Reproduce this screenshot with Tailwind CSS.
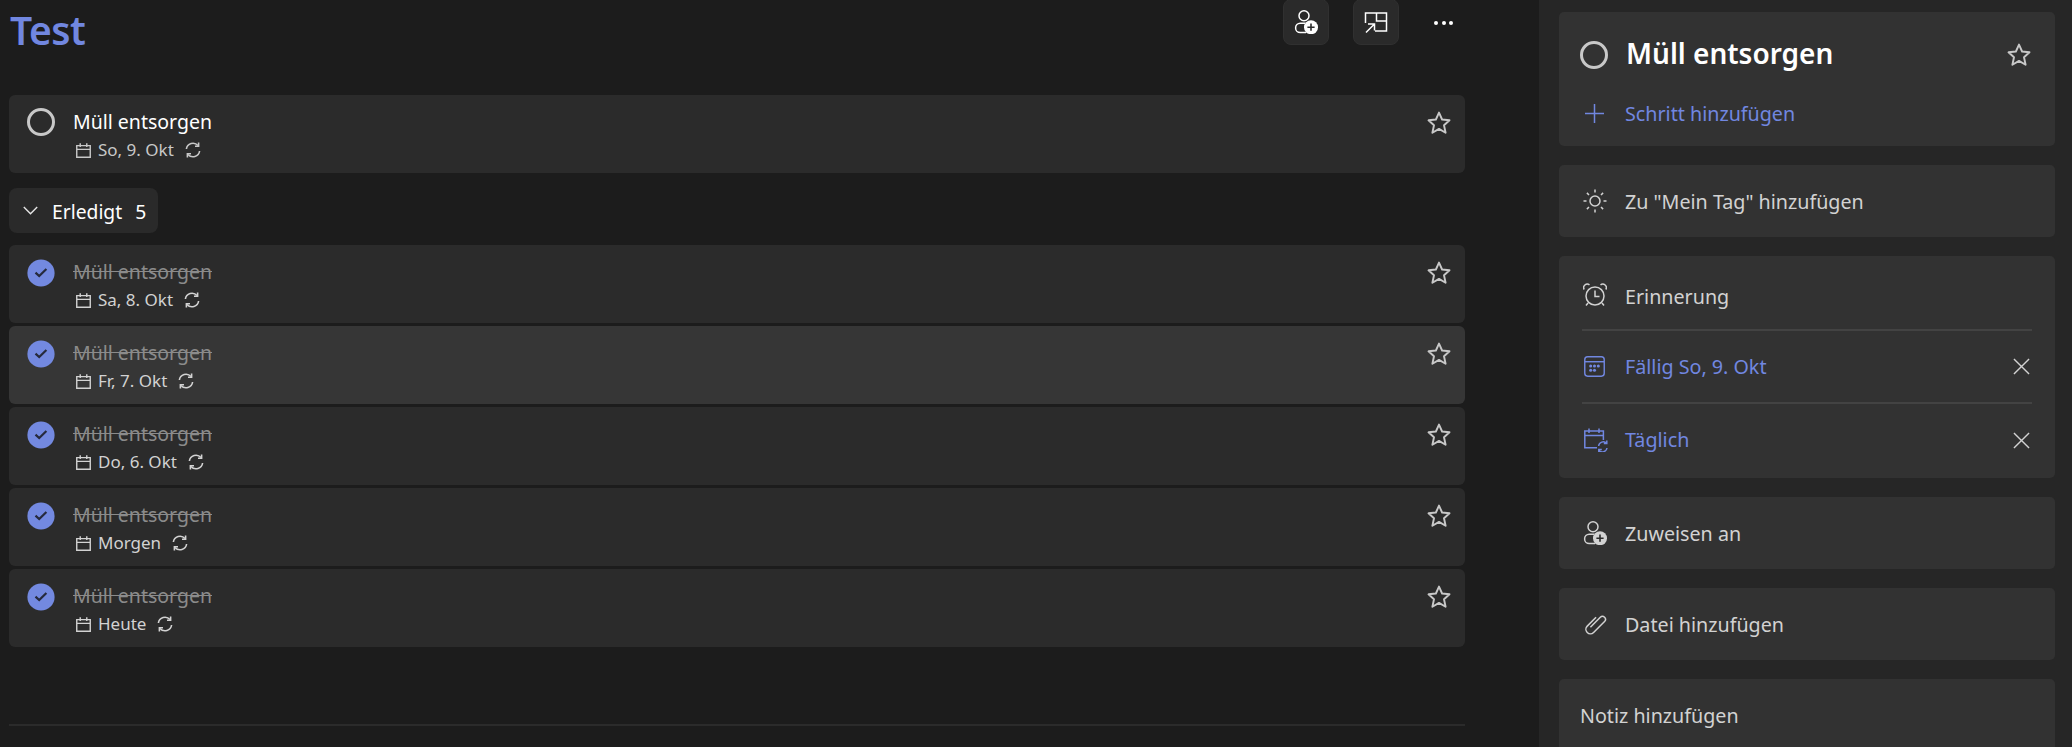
<!DOCTYPE html>
<html lang="de">
<head>
<meta charset="utf-8">
<script src="https://cdn.jsdelivr.net/npm/@tailwindcss/browser@4"></script>
</head>
<body class="bg-[#1c1c1c] overflow-hidden font-['Noto_Sans','Open_Sans',sans-serif]">
<svg class="hidden" width="0" height="0">
  <symbol id="star" viewBox="0 0 24 24"><path d="M12 1.6l3.1 6.9 7.4.8-5.5 5 1.6 7.5-6.6-3.9-6.6 3.9 1.6-7.5-5.5-5 7.4-.8z" fill="none" stroke="currentColor" stroke-width="1.9" stroke-linejoin="round"/></symbol>
  <symbol id="cal" viewBox="0 0 16 16"><path d="M.8 2.800h14.400v12.400H.8zM.8 6.800h14.400M4.500.3v4M11.500.3v4" fill="none" stroke="currentColor" stroke-width="1.5"/></symbol>
  <symbol id="sync" viewBox="0 0 16 16"><g fill="none" stroke="currentColor" stroke-width="1.6"><path d="M1.4 7A6.6 6.6 0 0 1 13 3.6"/><path d="M14.6 9A6.6 6.6 0 0 1 3 12.4"/><path d="M13.6.6v3.6H10"/><path d="M2.4 15.400v-3.600H6"/></g></symbol>
  <symbol id="assign" viewBox="0 0 24 24"><g fill="none" stroke="currentColor" stroke-width="1.5"><circle cx="10" cy="5.800" r="5"/><path d="M12 22.500H6.200a4.400 4.400 0 0 1 0-9.200h5"/></g><circle cx="17" cy="17.200" r="7" fill="currentColor"/><path d="M17 13.600v7.200M13.400 17.200h7.200" stroke="#2b2b2b" stroke-width="1.6"/></symbol>
  <symbol id="check" viewBox="0 0 28 28"><circle cx="14" cy="14" r="13.600" fill="#7389e0"/><path d="M8.500 13.600l3.700 3.400 7.200-7" fill="none" stroke="#262a3c" stroke-width="2.200"/></symbol>
  <symbol id="x" viewBox="0 0 18 18"><path d="M1 1l16 16M17 1L1 17" fill="none" stroke="currentColor" stroke-width="1.500"/></symbol>
</svg>
<div class="flex h-[747px] w-[2072px]">
  <main class="flex w-[1539px] shrink-0 flex-col pr-[74px] pl-[9px]">
    <header class="flex h-[95px] shrink-0 items-start">
      <h1 class="mt-[5px] ml-[1px] text-[39px] leading-[50px] font-semibold tracking-[-0.5px] text-[#7187e0]">Test</h1>
      <div class="ml-auto flex items-center">
        <button class="-mt-[1px] flex size-[46px] items-center justify-center rounded-[8px] border border-[#303030] bg-[#2a2a2a] text-white"><svg class="size-[24px]"><use href="#assign"/></svg></button>
        <button class="-mt-[1px] ml-[24px] flex size-[46px] items-center justify-center rounded-[8px] border border-[#303030] bg-[#2a2a2a] text-white">
          <svg class="size-[24px]" viewBox="0 0 24 24" fill="none" stroke="currentColor" stroke-width="1.500"><path d="M1.500 13V3h21v18H11M12.500 3v8h10"/><path d="M2 22.500l8-8M4 14h6.500v6.500"/></svg>
        </button>
        <div class="ml-[35px] mr-[12px] flex gap-[3.500px]"><span class="size-[4px] rounded-full bg-white"></span><span class="size-[4px] rounded-full bg-white"></span><span class="size-[4px] rounded-full bg-white"></span></div>
      </div>
    </header>

    <div class="flex h-[78px] shrink-0 rounded-[6px] bg-[#2b2b2b] pt-[13px] pr-[14px] pl-[18px]">
      <span class="size-[28px] shrink-0 rounded-full border-[3px] border-[#c8c8c8]"></span>
      <div class="ml-[18px]">
        <p class="text-[19.500px] leading-[27px] text-white">Müll entsorgen</p>
        <p class="mt-[4px] flex items-center text-[17px] leading-[22px] text-[#c8c8c8]"><svg class="ml-[3px] mr-[7px] size-[15px]"><use href="#cal"/></svg>So, 9. Okt<svg class="ml-[11px] size-[16px]"><use href="#sync"/></svg></p>
      </div>
      <svg class="ml-auto mt-[3px] size-[24px] text-[#c8c8c8]"><use href="#star"/></svg>
    </div>

    <div class="mt-[15px] flex h-[45px] w-[149px] shrink-0 items-center rounded-[8px] bg-[#2a2a2a] pt-[4px] pl-[14px] text-[19.300px] text-white">
      <svg class="-mt-[4px] size-[15px]" viewBox="0 0 15 15" fill="none" stroke="#e6e6e6" stroke-width="1.400"><path d="M.8 4l6.700 6.700L14.200 4"/></svg>
      <span class="ml-[14px]">Erledigt</span><span class="ml-[13px]">5</span>
    </div>

    <div class="mt-[12px] flex flex-col gap-[3px]">
      <div class="flex h-[78px] rounded-[6px] bg-[#2b2b2b] pt-[13px] pr-[14px] pl-[18px]">
        <svg class="mt-[1px] size-[28px] shrink-0"><use href="#check"/></svg>
        <div class="ml-[18px]">
          <p class="text-[19.500px] leading-[27px] text-[#8b8b8b] line-through">Müll entsorgen</p>
          <p class="mt-[4px] flex items-center text-[17px] leading-[22px] text-[#d2d2d2]"><svg class="ml-[3px] mr-[7px] size-[15px]"><use href="#cal"/></svg>Sa, 8. Okt<svg class="ml-[11px] size-[16px]"><use href="#sync"/></svg></p>
        </div>
        <svg class="ml-auto mt-[3px] size-[24px] text-[#c8c8c8]"><use href="#star"/></svg>
      </div>
      <div class="flex h-[78px] rounded-[6px] bg-[#363636] pt-[13px] pr-[14px] pl-[18px]">
        <svg class="mt-[1px] size-[28px] shrink-0"><use href="#check"/></svg>
        <div class="ml-[18px]">
          <p class="text-[19.500px] leading-[27px] text-[#8b8b8b] line-through">Müll entsorgen</p>
          <p class="mt-[4px] flex items-center text-[17px] leading-[22px] text-[#d2d2d2]"><svg class="ml-[3px] mr-[7px] size-[15px]"><use href="#cal"/></svg>Fr, 7. Okt<svg class="ml-[11px] size-[16px]"><use href="#sync"/></svg></p>
        </div>
        <svg class="ml-auto mt-[3px] size-[24px] text-[#c8c8c8]"><use href="#star"/></svg>
      </div>
      <div class="flex h-[78px] rounded-[6px] bg-[#2b2b2b] pt-[13px] pr-[14px] pl-[18px]">
        <svg class="mt-[1px] size-[28px] shrink-0"><use href="#check"/></svg>
        <div class="ml-[18px]">
          <p class="text-[19.500px] leading-[27px] text-[#8b8b8b] line-through">Müll entsorgen</p>
          <p class="mt-[4px] flex items-center text-[17px] leading-[22px] text-[#d2d2d2]"><svg class="ml-[3px] mr-[7px] size-[15px]"><use href="#cal"/></svg>Do, 6. Okt<svg class="ml-[11px] size-[16px]"><use href="#sync"/></svg></p>
        </div>
        <svg class="ml-auto mt-[3px] size-[24px] text-[#c8c8c8]"><use href="#star"/></svg>
      </div>
      <div class="flex h-[78px] rounded-[6px] bg-[#2b2b2b] pt-[13px] pr-[14px] pl-[18px]">
        <svg class="mt-[1px] size-[28px] shrink-0"><use href="#check"/></svg>
        <div class="ml-[18px]">
          <p class="text-[19.500px] leading-[27px] text-[#8b8b8b] line-through">Müll entsorgen</p>
          <p class="mt-[4px] flex items-center text-[17px] leading-[22px] text-[#d2d2d2]"><svg class="ml-[3px] mr-[7px] size-[15px]"><use href="#cal"/></svg>Morgen<svg class="ml-[11px] size-[16px]"><use href="#sync"/></svg></p>
        </div>
        <svg class="ml-auto mt-[3px] size-[24px] text-[#c8c8c8]"><use href="#star"/></svg>
      </div>
      <div class="flex h-[78px] rounded-[6px] bg-[#2b2b2b] pt-[13px] pr-[14px] pl-[18px]">
        <svg class="mt-[1px] size-[28px] shrink-0"><use href="#check"/></svg>
        <div class="ml-[18px]">
          <p class="text-[19.500px] leading-[27px] text-[#8b8b8b] line-through">Müll entsorgen</p>
          <p class="mt-[4px] flex items-center text-[17px] leading-[22px] text-[#d2d2d2]"><svg class="ml-[3px] mr-[7px] size-[15px]"><use href="#cal"/></svg>Heute<svg class="ml-[11px] size-[16px]"><use href="#sync"/></svg></p>
        </div>
        <svg class="ml-auto mt-[3px] size-[24px] text-[#c8c8c8]"><use href="#star"/></svg>
      </div>
    </div>
    <div class="mt-[77px] h-[2px] shrink-0 bg-[#2b2b2b]"></div>
  </main>

  <aside class="flex flex-1 flex-col bg-[#262626] pt-[12px] pr-[17px] pl-[20px] text-[19.700px]">
    <section class="flex h-[134px] shrink-0 flex-col rounded-[5px] bg-[#323232] px-[21px]">
      <div class="mt-[27px] flex items-center">
        <span class="size-[28px] shrink-0 rounded-full border-[3px] border-[#c8c8c8]"></span>
        <h2 class="ml-[18px] -mt-[4px] text-[28px] leading-[36px] font-semibold text-white">Müll entsorgen</h2>
        <svg class="ml-auto mr-[3px] size-[24px] text-[#c8c8c8]"><use href="#star"/></svg>
      </div>
      <div class="mt-[28px] flex items-center text-[#7187e0]">
        <svg class="ml-[5px] size-[19px]" viewBox="0 0 19 19" fill="none" stroke="currentColor" stroke-width="1.500"><path d="M9.500 0v19M0 9.500h19"/></svg>
        <span class="ml-[21px]">Schritt hinzufügen</span>
      </div>
    </section>

    <section class="mt-[19px] flex h-[72px] shrink-0 items-center rounded-[5px] bg-[#323232] px-[23px] text-[#d2d2d2]">
      <svg class="ml-[1px] size-[24px]" viewBox="0 0 24 24" fill="none" stroke="currentColor" stroke-width="1.500"><circle cx="12" cy="12" r="5"/><path d="M12 .5v3M12 20.500v3M.5 12h3M20.500 12h3M3.900 3.900L6 6M18 18l2.100 2.100M3.900 20.100L6 18M18 6l2.100-2.100"/></svg>
      <span class="ml-[18px] pt-[2px]">Zu "Mein Tag" hinzufügen</span>
    </section>

    <section class="mt-[19px] flex h-[222px] shrink-0 flex-col rounded-[5px] bg-[#323232] px-[23px]">
      <div class="flex h-[75px] shrink-0 items-center border-b-2 border-[#434343] text-[#d2d2d2]">
        <svg class="ml-[1px] mt-[5px] size-[24px]" viewBox="0 0 24 24" fill="none" stroke="currentColor" stroke-width="1.500"><circle cx="12" cy="13" r="9"/><path d="M12 7.500V13.500h4.500M1.200 6.500A3.600 3.600 0 0 1 6.500 1.800M22.800 6.500a3.600 3.600 0 0 0-5.300-4.700M5 20l-2 2.500M19 20l2 2.500"/></svg>
        <span class="ml-[18px] pt-[8px]">Erinnerung</span>
      </div>
      <div class="flex h-[73px] shrink-0 items-center border-b-2 border-[#434343] text-[#7187e0]">
        <svg class="ml-[2px] size-[21px]" viewBox="0 0 22 22" fill="none" stroke="currentColor" stroke-width="1.500"><rect x=".8" y=".8" width="20.400" height="20.400" rx="3"/><path d="M1 6h20"/><g fill="currentColor" stroke="none"><circle cx="7" cy="10.500" r="1.600"/><circle cx="11" cy="10.500" r="1.600"/><circle cx="15" cy="10.500" r="1.600"/><circle cx="7" cy="15" r="1.600"/><circle cx="11" cy="15" r="1.600"/></g></svg>
        <span class="ml-[20px] pt-[1px]">Fällig So, 9. Okt</span>
        <svg class="ml-auto mr-[2px] size-[17px] text-[#d2d2d2]"><use href="#x"/></svg>
      </div>
      <div class="flex h-[74px] shrink-0 items-center pb-[2px] text-[#7187e0]">
        <svg class="ml-[2px] size-[24px]" viewBox="0 0 24 24" fill="none" stroke="currentColor" stroke-width="1.500"><path d="M13 19.800H.8V3h18.600v9M.8 7.500h18.600M5 .5V5M15 .5V5"/><path d="M14.600 18a4.600 4.600 0 0 1 8-2.600M23 20a4.600 4.600 0 0 1-8 2.400M22.800 12.600v3h-3M14.800 24v-2.500h3"/></svg>
        <span class="ml-[17px]">Täglich</span>
        <svg class="ml-auto mr-[2px] size-[17px] text-[#d2d2d2]"><use href="#x"/></svg>
      </div>
    </section>

    <section class="mt-[19px] flex h-[72px] shrink-0 items-center rounded-[5px] bg-[#323232] px-[23px] text-[#d2d2d2]">
      <svg class="ml-[1px] size-[24px]"><use href="#assign"/></svg>
      <span class="ml-[18px] pt-[2px]">Zuweisen an</span>
    </section>

    <section class="mt-[19px] flex h-[72px] shrink-0 items-center rounded-[5px] bg-[#323232] px-[23px] text-[#d2d2d2]">
      <svg class="ml-[1px] size-[24px]" viewBox="0 0 24 24" fill="none" stroke="currentColor" stroke-width="1.500"><g transform="rotate(45 12 12)"><path d="M11 17.500V3.500a3 3 0 0 1 6 0V19a4.500 4.500 0 0 1-9 0V6.500"/></g></svg>
      <span class="ml-[18px] pt-[2px]">Datei hinzufügen</span>
    </section>

    <section class="mt-[19px] flex h-[90px] shrink-0 items-start rounded-[5px] bg-[#323232] px-[21px] pt-[22px] text-[#d2d2d2]">
      <span>Notiz hinzufügen</span>
    </section>
  </aside>
</div>
</body>
</html>
